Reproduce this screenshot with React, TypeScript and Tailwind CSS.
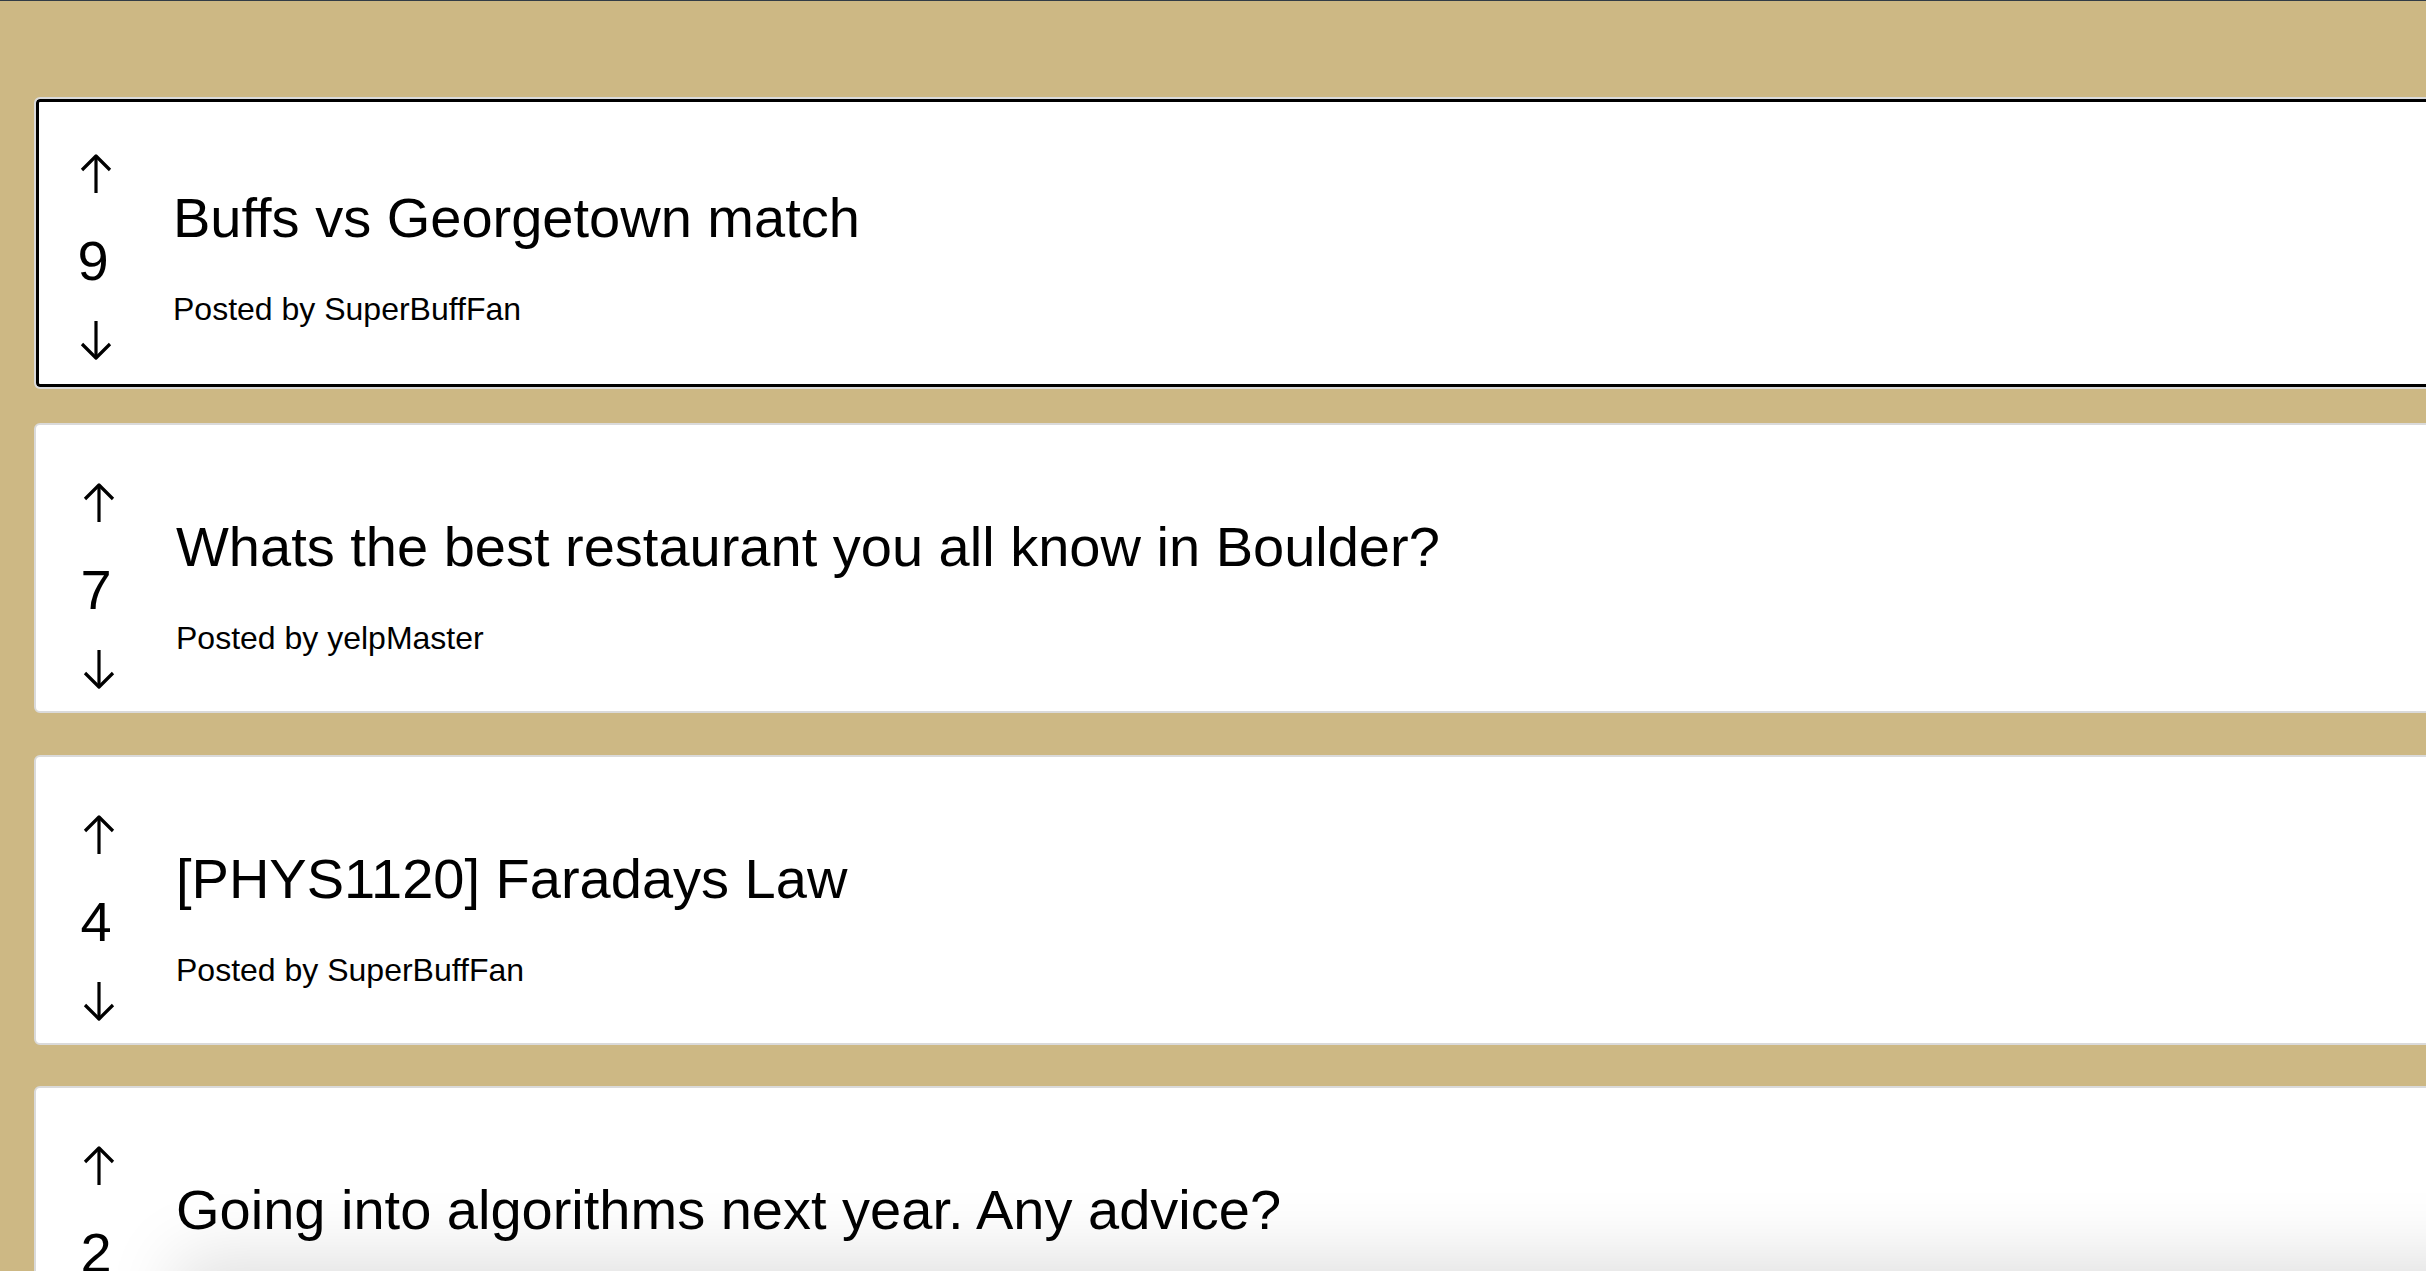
import React from 'react';

type Post = {
  votes: number;
  title: string;
  author: string;
};

const posts: Post[] = [
  { votes: 9, title: 'Buffs vs Georgetown match', author: 'SuperBuffFan' },
  { votes: 7, title: 'Whats the best restaurant you all know in Boulder?', author: 'yelpMaster' },
  { votes: 4, title: '[PHYS1120] Faradays Law', author: 'SuperBuffFan' },
  { votes: 2, title: 'Going into algorithms next year. Any advice?', author: 'studentDev' },
];

function VoteArrow({ down }: { down?: boolean }) {
  return (
    <svg
      width="34"
      height="40"
      viewBox="0 0 34 40"
      fill="none"
      stroke="#000"
      strokeWidth="3.2"
      strokeLinejoin="round"
      className={down ? 'rotate-180' : ''}
    >
      <path d="M17 3 V40" />
      <path d="M3 17 L17 3 L31 17" />
    </svg>
  );
}

function PostCard({ post, selected }: { post: Post; selected?: boolean }) {
  return (
    <div
      className={`flex w-[2440px] shrink-0 items-start rounded-md border-2 border-[#dadada] bg-white ${
        selected ? 'h-[292px] pl-[43px] pt-[54px] shadow-[inset_0_0_0_3px_#000]' : 'h-[290px] pl-[46px] pt-[57px]'
      }`}
    >
      {/* vote column */}
      <div className="flex w-[34px] flex-col items-center">
        <VoteArrow />
        <span className="mr-[6px] mt-[40px] text-[56px] leading-[56px]">{post.votes}</span>
        <div className="mt-[32px]">
          <VoteArrow down />
        </div>
      </div>

      <div className="ml-[60px] mt-[37px] flex flex-col">
        <h2 className="whitespace-nowrap text-[56px] leading-[56px]">{post.title}</h2>
        <p className="mt-[47px] whitespace-nowrap text-[32px] leading-[32px]">Posted by {post.author}</p>
      </div>
    </div>
  );
}

export default function App() {
  return (
    <div className="relative h-screen overflow-hidden border-t border-[#323c46] bg-[#cdb884] font-['Liberation_Sans',Arial,sans-serif] text-black">
      <div className="flex flex-col pl-[34px] pt-[96px]">
        <PostCard post={posts[0]} selected />
        <div className="mt-[34px]">
          <PostCard post={posts[1]} />
        </div>
        <div className="mt-[42px]">
          <PostCard post={posts[2]} />
        </div>
        <div className="mt-[41px]">
          <PostCard post={posts[3]} />
        </div>
      </div>

      {/* bottom bar peeking in from below the fold */}
      <div className="pointer-events-none absolute left-[190px] right-[-100px] top-full h-[100px] bg-white shadow-[0_0_70px_14px_rgba(0,0,0,0.13)]" />
    </div>
  );
}
